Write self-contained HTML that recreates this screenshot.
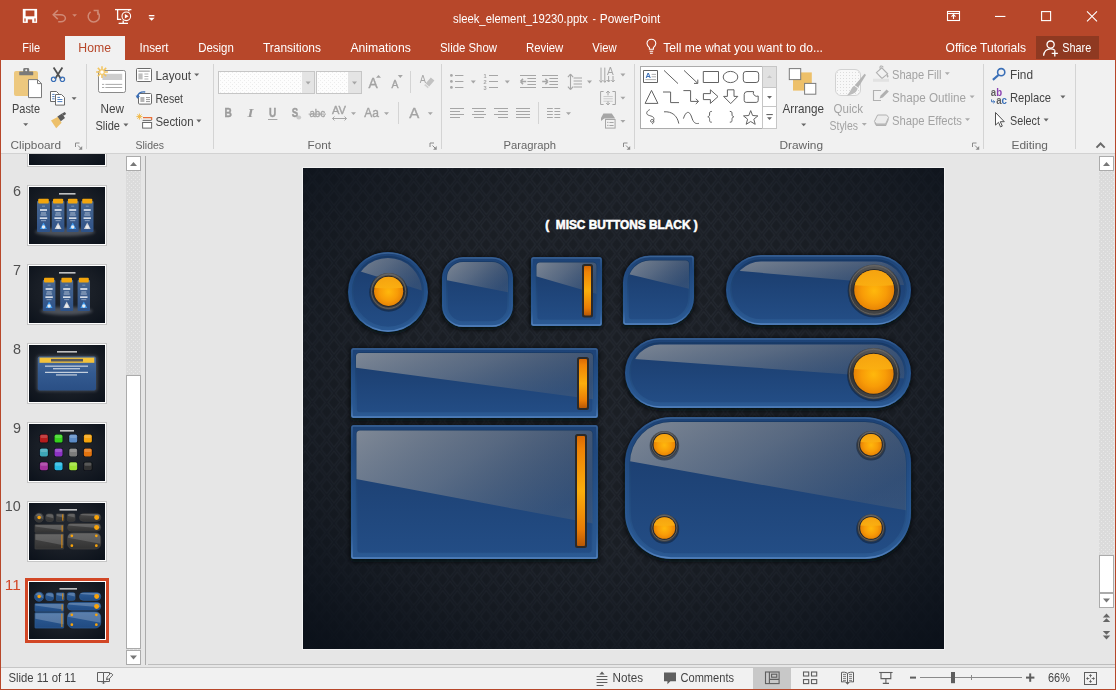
<!DOCTYPE html>
<html lang="en"><head><meta charset="utf-8"><title>sleek_element_19230.pptx - PowerPoint</title>
<style>
html,body{margin:0;padding:0;}
body{width:1116px;height:690px;position:relative;overflow:hidden;background:#E6E6E6;font-family:"Liberation Sans", sans-serif;}
.abs{position:absolute;}
#titlebar{left:0;top:0;width:1116px;height:60px;background:#B7472A;}
#hometab{left:65px;top:36px;width:60px;height:24px;background:#F1F1F1;}
#sharebtn{left:1036px;top:36px;width:63px;height:23px;background:#8F3921;}
#ribbon{left:1px;top:60px;width:1114px;height:93px;background:#F1F1F1;border-bottom:1px solid #D2D2D2;}
.sep{position:absolute;top:64px;width:1px;height:85px;background:#D4D4D4;}
#work{left:1px;top:154px;width:1114px;height:510px;background:#E6E6E6;}
#status{left:1px;top:668px;width:1114px;height:21px;background:#F1F1F1;}
.bl{left:0;top:0;width:1px;height:690px;background:#B7472A;}
.br{left:1115px;top:0;width:1px;height:690px;background:#B7472A;}
.bb{left:0;top:689px;width:1116px;height:1px;background:#B7472A;}
#overlay{left:0;top:0;width:1116px;height:690px;pointer-events:none;will-change:transform;}
#overlay text{font-family:"Liberation Sans", sans-serif;}
#slide{left:303px;top:168px;width:641px;height:481px;box-shadow:0 0 0 1px #F2F2F2;}
</style></head><body>
<div id="titlebar" class="abs"></div>
<div id="hometab" class="abs"></div>
<div id="sharebtn" class="abs"></div>
<div id="ribbon" class="abs"></div>
<div class="sep" style="left:86px"></div><div class="sep" style="left:213px"></div><div class="sep" style="left:441px"></div><div class="sep" style="left:634px"></div><div class="sep" style="left:983px"></div><div class="sep" style="left:1075px"></div>
<div id="work" class="abs"></div>
<svg class="abs" id="thumbs" style="left:1px;top:154px" width="146" height="511" viewBox="1 154 146 511">
<defs>
<radialGradient id="tbg" cx="0.5" cy="0.45" r="0.7"><stop offset="0" stop-color="#232830"/><stop offset="0.6" stop-color="#181D25"/><stop offset="1" stop-color="#0D131C"/></radialGradient>
<linearGradient id="tcard" x1="0" y1="0" x2="0" y2="1"><stop offset="0" stop-color="#4A6890"/><stop offset="1" stop-color="#2E5288"/></linearGradient>
<linearGradient id="tpanel" x1="0" y1="0" x2="0" y2="1"><stop offset="0" stop-color="#4A6C9C"/><stop offset="0.5" stop-color="#335A90"/><stop offset="1" stop-color="#2A4F85"/></linearGradient>
<linearGradient id="tgb" x1="0" y1="0" x2="0" y2="1"><stop offset="0" stop-color="#2D5C96"/><stop offset="1" stop-color="#214B82"/></linearGradient>
<linearGradient id="tgg" x1="0" y1="0" x2="0" y2="1"><stop offset="0" stop-color="#4A4A4A"/><stop offset="1" stop-color="#333333"/></linearGradient>
<pattern id="dots" width="4" height="4" patternUnits="userSpaceOnUse"><rect width="4" height="4" fill="#DBDBDB"/><rect x="1" y="1" width="1" height="1" fill="#E9E9E9"/><rect x="3" y="3" width="1" height="1" fill="#E9E9E9"/></pattern>
<filter id="tb" x="-20%" y="-20%" width="140%" height="140%"><feGaussianBlur stdDeviation="0.35"/></filter>
<filter id="tglow" x="-30%" y="-30%" width="160%" height="160%"><feGaussianBlur stdDeviation="1.6"/></filter>
</defs>
<rect x="27.5" y="106.5" width="79" height="60" fill="#FFFFFF" stroke="#C6C6C6" stroke-width="1"/>
<rect x="29" y="108" width="76" height="57" fill="url(#tbg)"/>
<rect x="27.5" y="185.5" width="79" height="60" fill="#FFFFFF" stroke="#C6C6C6" stroke-width="1"/>
<rect x="29" y="187" width="76" height="57" fill="url(#tbg)"/>
<rect x="59" y="193.2" width="16.5" height="1.3" fill="#E8E8E8" filter="url(#tb)"/>
<ellipse cx="65" cy="232" rx="30" ry="4" fill="#8A8F98" opacity="0.45" filter="url(#tglow)"/>
<g filter="url(#tb)"><rect x="37" y="201" width="13" height="31" rx="1" fill="url(#tcard)"/>
<rect x="38.2" y="198.8" width="10.6" height="4.6" rx="1" fill="#F2A50C"/>
<rect x="42.0" y="205.8" width="3" height="0.6" fill="#9FB4D0"/>
<rect x="40.0" y="209.2" width="7" height="1.6" fill="#E8ECF2"/>
<rect x="41.0" y="212.6" width="5" height="0.8" fill="#C8D4E4"/>
<rect x="40.5" y="214.6" width="6" height="0.8" fill="#C8D4E4"/>
<rect x="39.8" y="217.4" width="7.4" height="1.5" fill="#E8ECF2"/>
<rect x="41.0" y="220.4" width="5" height="0.7" fill="#B0C0D8"/>
</g>
<g filter="url(#tb)"><rect x="51.8" y="201" width="12.600000000000009" height="31" rx="1" fill="url(#tcard)"/>
<rect x="53.0" y="198.8" width="10.200000000000008" height="4.6" rx="1" fill="#F2A50C"/>
<rect x="56.6" y="205.8" width="3" height="0.6" fill="#9FB4D0"/>
<rect x="54.6" y="209.2" width="7" height="1.6" fill="#E8ECF2"/>
<rect x="55.6" y="212.6" width="5" height="0.8" fill="#C8D4E4"/>
<rect x="55.1" y="214.6" width="6" height="0.8" fill="#C8D4E4"/>
<rect x="54.4" y="217.4" width="7.4" height="1.5" fill="#E8ECF2"/>
<rect x="55.6" y="220.4" width="5" height="0.7" fill="#B0C0D8"/>
</g>
<g filter="url(#tb)"><rect x="66.7" y="201" width="12.0" height="31" rx="1" fill="url(#tcard)"/>
<rect x="67.9" y="198.8" width="9.6" height="4.6" rx="1" fill="#F2A50C"/>
<rect x="71.2" y="205.8" width="3" height="0.6" fill="#9FB4D0"/>
<rect x="69.2" y="209.2" width="7" height="1.6" fill="#E8ECF2"/>
<rect x="70.2" y="212.6" width="5" height="0.8" fill="#C8D4E4"/>
<rect x="69.7" y="214.6" width="6" height="0.8" fill="#C8D4E4"/>
<rect x="69.0" y="217.4" width="7.4" height="1.5" fill="#E8ECF2"/>
<rect x="70.2" y="220.4" width="5" height="0.7" fill="#B0C0D8"/>
</g>
<g filter="url(#tb)"><rect x="81" y="201" width="12.5" height="31" rx="1" fill="url(#tcard)"/>
<rect x="82.2" y="198.8" width="10.1" height="4.6" rx="1" fill="#F2A50C"/>
<rect x="85.75" y="205.8" width="3" height="0.6" fill="#9FB4D0"/>
<rect x="83.75" y="209.2" width="7" height="1.6" fill="#E8ECF2"/>
<rect x="84.75" y="212.6" width="5" height="0.8" fill="#C8D4E4"/>
<rect x="84.25" y="214.6" width="6" height="0.8" fill="#C8D4E4"/>
<rect x="83.55" y="217.4" width="7.4" height="1.5" fill="#E8ECF2"/>
<rect x="84.75" y="220.4" width="5" height="0.7" fill="#B0C0D8"/>
</g>
<path d="M43.5 222.5 l3.4 6.6 h-6.8z" fill="#3E9BF0" filter="url(#tb)"/><circle cx="43.5" cy="227" r="1.7" fill="#E8EAEE" filter="url(#tb)"/>
<path d="M58.1 222.5 l3.4 6.6 h-6.8z" fill="#C8CCD2" filter="url(#tb)"/><circle cx="58.1" cy="227" r="1.7" fill="#E8EAEE" filter="url(#tb)"/>
<path d="M72.7 222.5 l3.4 6.6 h-6.8z" fill="#3E9BF0" filter="url(#tb)"/><circle cx="72.7" cy="227" r="1.7" fill="#E8EAEE" filter="url(#tb)"/>
<path d="M87.25 222.5 l3.4 6.6 h-6.8z" fill="#C8CCD2" filter="url(#tb)"/><circle cx="87.25" cy="227" r="1.7" fill="#E8EAEE" filter="url(#tb)"/>
<rect x="27.5" y="264.5" width="79" height="60" fill="#FFFFFF" stroke="#C6C6C6" stroke-width="1"/>
<rect x="29" y="266" width="76" height="57" fill="url(#tbg)"/>
<rect x="59" y="272.2" width="16.5" height="1.3" fill="#E8E8E8" filter="url(#tb)"/>
<ellipse cx="66.5" cy="311" rx="26" ry="4" fill="#8A8F98" opacity="0.45" filter="url(#tglow)"/>
<g filter="url(#tb)"><rect x="42.8" y="280" width="12.600000000000001" height="31" rx="1" fill="url(#tcard)"/>
<rect x="44.0" y="277.8" width="10.200000000000001" height="4.6" rx="1" fill="#F2A50C"/>
<rect x="47.599999999999994" y="284.8" width="3" height="0.6" fill="#9FB4D0"/>
<rect x="45.599999999999994" y="288.2" width="7" height="1.6" fill="#E8ECF2"/>
<rect x="46.599999999999994" y="291.6" width="5" height="0.8" fill="#C8D4E4"/>
<rect x="46.099999999999994" y="293.6" width="6" height="0.8" fill="#C8D4E4"/>
<rect x="45.39999999999999" y="296.4" width="7.4" height="1.5" fill="#E8ECF2"/>
<rect x="46.599999999999994" y="299.4" width="5" height="0.7" fill="#B0C0D8"/>
</g>
<path d="M49.099999999999994 301.5 l3.4 6.6 h-6.8z" fill="#3E9BF0" filter="url(#tb)"/><circle cx="49.099999999999994" cy="306" r="1.7" fill="#E8EAEE" filter="url(#tb)"/>
<g filter="url(#tb)"><rect x="60.2" y="280" width="13.0" height="31" rx="1" fill="url(#tcard)"/>
<rect x="61.400000000000006" y="277.8" width="10.6" height="4.6" rx="1" fill="#F2A50C"/>
<rect x="65.2" y="284.8" width="3" height="0.6" fill="#9FB4D0"/>
<rect x="63.2" y="288.2" width="7" height="1.6" fill="#E8ECF2"/>
<rect x="64.2" y="291.6" width="5" height="0.8" fill="#C8D4E4"/>
<rect x="63.7" y="293.6" width="6" height="0.8" fill="#C8D4E4"/>
<rect x="63.0" y="296.4" width="7.4" height="1.5" fill="#E8ECF2"/>
<rect x="64.2" y="299.4" width="5" height="0.7" fill="#B0C0D8"/>
</g>
<path d="M66.7 301.5 l3.4 6.6 h-6.8z" fill="#C8CCD2" filter="url(#tb)"/><circle cx="66.7" cy="306" r="1.7" fill="#E8EAEE" filter="url(#tb)"/>
<g filter="url(#tb)"><rect x="77.6" y="280" width="12.400000000000006" height="31" rx="1" fill="url(#tcard)"/>
<rect x="78.8" y="277.8" width="10.000000000000005" height="4.6" rx="1" fill="#F2A50C"/>
<rect x="82.3" y="284.8" width="3" height="0.6" fill="#9FB4D0"/>
<rect x="80.3" y="288.2" width="7" height="1.6" fill="#E8ECF2"/>
<rect x="81.3" y="291.6" width="5" height="0.8" fill="#C8D4E4"/>
<rect x="80.8" y="293.6" width="6" height="0.8" fill="#C8D4E4"/>
<rect x="80.1" y="296.4" width="7.4" height="1.5" fill="#E8ECF2"/>
<rect x="81.3" y="299.4" width="5" height="0.7" fill="#B0C0D8"/>
</g>
<path d="M83.8 301.5 l3.4 6.6 h-6.8z" fill="#3E9BF0" filter="url(#tb)"/><circle cx="83.8" cy="306" r="1.7" fill="#E8EAEE" filter="url(#tb)"/>
<rect x="27.5" y="343.5" width="79" height="60" fill="#FFFFFF" stroke="#C6C6C6" stroke-width="1"/>
<rect x="29" y="345" width="76" height="57" fill="url(#tbg)"/>
<rect x="57" y="351.2" width="20" height="1.3" fill="#E8E8E8" filter="url(#tb)"/>
<rect x="36.500" y="355.5" width="61" height="36" rx="3" fill="#9098A4" opacity="0.32" filter="url(#tglow)"/>
<rect x="37.8" y="356.5" width="58.2" height="34" rx="2" fill="url(#tpanel)"/>
<rect x="39.5" y="357.6" width="54.8" height="5.2" fill="#F4C23A"/>
<rect x="51" y="358.9" width="32" height="2.6" fill="#3B4560" opacity="0.85" filter="url(#tb)"/>
<rect x="45" y="365.6" width="43" height="1.1" fill="#E6EAF0" opacity="0.9"/>
<rect x="53" y="368.2" width="27" height="1.1" fill="#E6EAF0" opacity="0.9"/>
<rect x="45" y="371.8" width="43" height="1.1" fill="#E6EAF0" opacity="0.9"/>
<rect x="56" y="374.4" width="21" height="1.1" fill="#E6EAF0" opacity="0.9"/>
<rect x="27.5" y="422.5" width="79" height="60" fill="#FFFFFF" stroke="#C6C6C6" stroke-width="1"/>
<rect x="29" y="424" width="76" height="57" fill="url(#tbg)"/>
<rect x="60" y="430.2" width="14" height="1.3" fill="#E8E8E8" filter="url(#tb)"/>
<rect x="39.3" y="434.20000000000005" width="9.2" height="9" rx="1.8" fill="#05080C" opacity="0.6" filter="url(#tb)"/>
<rect x="39.9" y="434.6" width="8" height="8" rx="1.6" fill="#B51C1E" filter="url(#tb)"/>
<rect x="40.5" y="435.1" width="6.8" height="3" rx="1" fill="#FFFFFF" opacity="0.18"/>
<rect x="53.949999999999996" y="434.20000000000005" width="9.2" height="9" rx="1.8" fill="#05080C" opacity="0.6" filter="url(#tb)"/>
<rect x="54.55" y="434.6" width="8" height="8" rx="1.6" fill="#35D21E" filter="url(#tb)"/>
<rect x="55.15" y="435.1" width="6.8" height="3" rx="1" fill="#FFFFFF" opacity="0.18"/>
<rect x="68.60000000000001" y="434.20000000000005" width="9.2" height="9" rx="1.8" fill="#05080C" opacity="0.6" filter="url(#tb)"/>
<rect x="69.2" y="434.6" width="8" height="8" rx="1.6" fill="#5C8BC6" filter="url(#tb)"/>
<rect x="69.8" y="435.1" width="6.8" height="3" rx="1" fill="#FFFFFF" opacity="0.18"/>
<rect x="83.25" y="434.20000000000005" width="9.2" height="9" rx="1.8" fill="#05080C" opacity="0.6" filter="url(#tb)"/>
<rect x="83.85" y="434.6" width="8" height="8" rx="1.6" fill="#F5A20A" filter="url(#tb)"/>
<rect x="84.44999999999999" y="435.1" width="6.8" height="3" rx="1" fill="#FFFFFF" opacity="0.18"/>
<rect x="39.3" y="448.00000000000006" width="9.2" height="9" rx="1.8" fill="#05080C" opacity="0.6" filter="url(#tb)"/>
<rect x="39.9" y="448.40000000000003" width="8" height="8" rx="1.6" fill="#3CA7B7" filter="url(#tb)"/>
<rect x="40.5" y="448.90000000000003" width="6.8" height="3" rx="1" fill="#FFFFFF" opacity="0.18"/>
<rect x="53.949999999999996" y="448.00000000000006" width="9.2" height="9" rx="1.8" fill="#05080C" opacity="0.6" filter="url(#tb)"/>
<rect x="54.55" y="448.40000000000003" width="8" height="8" rx="1.6" fill="#8B30C2" filter="url(#tb)"/>
<rect x="55.15" y="448.90000000000003" width="6.8" height="3" rx="1" fill="#FFFFFF" opacity="0.18"/>
<rect x="68.60000000000001" y="448.00000000000006" width="9.2" height="9" rx="1.8" fill="#05080C" opacity="0.6" filter="url(#tb)"/>
<rect x="69.2" y="448.40000000000003" width="8" height="8" rx="1.6" fill="#7C7C7C" filter="url(#tb)"/>
<rect x="69.8" y="448.90000000000003" width="6.8" height="3" rx="1" fill="#FFFFFF" opacity="0.18"/>
<rect x="83.25" y="448.00000000000006" width="9.2" height="9" rx="1.8" fill="#05080C" opacity="0.6" filter="url(#tb)"/>
<rect x="83.85" y="448.40000000000003" width="8" height="8" rx="1.6" fill="#E2720F" filter="url(#tb)"/>
<rect x="84.44999999999999" y="448.90000000000003" width="6.8" height="3" rx="1" fill="#FFFFFF" opacity="0.18"/>
<rect x="39.3" y="461.80000000000007" width="9.2" height="9" rx="1.8" fill="#05080C" opacity="0.6" filter="url(#tb)"/>
<rect x="39.9" y="462.20000000000005" width="8" height="8" rx="1.6" fill="#A2309C" filter="url(#tb)"/>
<rect x="40.5" y="462.70000000000005" width="6.8" height="3" rx="1" fill="#FFFFFF" opacity="0.18"/>
<rect x="53.949999999999996" y="461.80000000000007" width="9.2" height="9" rx="1.8" fill="#05080C" opacity="0.6" filter="url(#tb)"/>
<rect x="54.55" y="462.20000000000005" width="8" height="8" rx="1.6" fill="#27B9E2" filter="url(#tb)"/>
<rect x="55.15" y="462.70000000000005" width="6.8" height="3" rx="1" fill="#FFFFFF" opacity="0.18"/>
<rect x="68.60000000000001" y="461.80000000000007" width="9.2" height="9" rx="1.8" fill="#05080C" opacity="0.6" filter="url(#tb)"/>
<rect x="69.2" y="462.20000000000005" width="8" height="8" rx="1.6" fill="#9CE232" filter="url(#tb)"/>
<rect x="69.8" y="462.70000000000005" width="6.8" height="3" rx="1" fill="#FFFFFF" opacity="0.18"/>
<rect x="83.25" y="461.80000000000007" width="9.2" height="9" rx="1.8" fill="#05080C" opacity="0.6" filter="url(#tb)"/>
<rect x="83.85" y="462.20000000000005" width="8" height="8" rx="1.6" fill="#303030" filter="url(#tb)"/>
<rect x="84.44999999999999" y="462.70000000000005" width="6.8" height="3" rx="1" fill="#FFFFFF" opacity="0.18"/>
<rect x="27.5" y="501.5" width="79" height="60" fill="#FFFFFF" stroke="#C6C6C6" stroke-width="1"/>
<rect x="29" y="503" width="76" height="57" fill="url(#tbg)"/>
<rect x="59.5" y="509.2" width="17.5" height="1.3" fill="#E8E8E8" filter="url(#tb)"/>
<g transform="translate(29,503) scale(0.11856474258970359) translate(-303,-168)">
<circle cx="388" cy="292" r="38" fill="url(#tgg)" stroke="#3C3C3C" stroke-width="7"/>
<rect x="445" y="260" width="65" height="64" rx="20" fill="url(#tgg)" stroke="#3C3C3C" stroke-width="7"/>
<rect x="534" y="260" width="65" height="63" rx="3" fill="url(#tgg)" stroke="#3C3C3C" stroke-width="7"/>
<rect x="626" y="259" width="65" height="63" rx="14" fill="url(#tgg)" stroke="#3C3C3C" stroke-width="7"/>
<rect x="729" y="258" width="179" height="64" rx="32" fill="url(#tgg)" stroke="#3C3C3C" stroke-width="7"/>
<rect x="354" y="351" width="241" height="64" rx="3" fill="url(#tgg)" stroke="#3C3C3C" stroke-width="7"/>
<rect x="628" y="341" width="280" height="64" rx="32" fill="url(#tgg)" stroke="#3C3C3C" stroke-width="7"/>
<rect x="354" y="428" width="241" height="128" rx="3" fill="url(#tgg)" stroke="#3C3C3C" stroke-width="7"/>
<rect x="628" y="420" width="280" height="136" rx="44" fill="url(#tgg)" stroke="#3C3C3C" stroke-width="7"/>
<path d="M356 353 H593 V399 L356 367Z" fill="#FFFFFF" opacity="0.16"/>
<path d="M356 431 H593 V525 L356 479Z" fill="#FFFFFF" opacity="0.16"/>
<path d="M640 345 H890 Q905 350 905 380 L632 357 Q634 348 640 345Z" fill="#FFFFFF" opacity="0.16"/>
<path d="M660 423 H870 Q905 425 905 460 V512 L631 461 Q631 425 660 423Z" fill="#FFFFFF" opacity="0.16"/>
<path d="M745 260 H885 Q900 263 905 282 L735 270 Q738 262 745 260Z" fill="#FFFFFF" opacity="0.16"/>
<path d="M447 280 Q447 262 465 262 H490 Q508 262 508 280 V296Z" fill="#FFFFFF" opacity="0.16"/>
<path d="M536 262 H597 V293 L536 278Z" fill="#FFFFFF" opacity="0.16"/>
<path d="M650 261 H689 V290 L628 276 Q632 262 650 261Z" fill="#FFFFFF" opacity="0.16"/>
<path d="M356 275 Q370 258 388 257 Q415 258 422 303Z" fill="#FFFFFF" opacity="0.16"/>
<circle cx="388.6" cy="291" r="15" fill="#F7A30B"/><circle cx="874" cy="290" r="21" fill="#F7A30B"/><circle cx="873.6" cy="373.7" r="21" fill="#F7A30B"/>
<circle cx="664.4" cy="444.7" r="11.5" fill="#F7A30B"/>
<circle cx="664.4" cy="528" r="11.5" fill="#F7A30B"/>
<circle cx="871" cy="444.7" r="11.5" fill="#F7A30B"/>
<circle cx="871" cy="528" r="11.5" fill="#F7A30B"/>
<rect x="583" y="264" width="9" height="53" fill="#D98A10"/><rect x="578" y="357" width="9" height="53" fill="#D98A10"/><rect x="576" y="434" width="9" height="114" fill="#D98A10"/>
</g>
<rect x="25" y="578" width="84" height="65" fill="#D24726"/>
<rect x="28" y="581" width="78" height="59" fill="#FFFFFF"/>
<rect x="29" y="582" width="76" height="57" fill="url(#tbg)"/>
<rect x="59.5" y="588.2" width="17.5" height="1.3" fill="#E8E8E8" filter="url(#tb)"/>
<g transform="translate(29,582) scale(0.11856474258970359) translate(-303,-168)">
<circle cx="388" cy="292" r="38" fill="url(#tgb)" stroke="#2A5890" stroke-width="7"/>
<rect x="445" y="260" width="65" height="64" rx="20" fill="url(#tgb)" stroke="#2A5890" stroke-width="7"/>
<rect x="534" y="260" width="65" height="63" rx="3" fill="url(#tgb)" stroke="#2A5890" stroke-width="7"/>
<rect x="626" y="259" width="65" height="63" rx="14" fill="url(#tgb)" stroke="#2A5890" stroke-width="7"/>
<rect x="729" y="258" width="179" height="64" rx="32" fill="url(#tgb)" stroke="#2A5890" stroke-width="7"/>
<rect x="354" y="351" width="241" height="64" rx="3" fill="url(#tgb)" stroke="#2A5890" stroke-width="7"/>
<rect x="628" y="341" width="280" height="64" rx="32" fill="url(#tgb)" stroke="#2A5890" stroke-width="7"/>
<rect x="354" y="428" width="241" height="128" rx="3" fill="url(#tgb)" stroke="#2A5890" stroke-width="7"/>
<rect x="628" y="420" width="280" height="136" rx="44" fill="url(#tgb)" stroke="#2A5890" stroke-width="7"/>
<path d="M356 353 H593 V399 L356 367Z" fill="#FFFFFF" opacity="0.22"/>
<path d="M356 431 H593 V525 L356 479Z" fill="#FFFFFF" opacity="0.22"/>
<path d="M640 345 H890 Q905 350 905 380 L632 357 Q634 348 640 345Z" fill="#FFFFFF" opacity="0.22"/>
<path d="M660 423 H870 Q905 425 905 460 V512 L631 461 Q631 425 660 423Z" fill="#FFFFFF" opacity="0.22"/>
<path d="M745 260 H885 Q900 263 905 282 L735 270 Q738 262 745 260Z" fill="#FFFFFF" opacity="0.22"/>
<path d="M447 280 Q447 262 465 262 H490 Q508 262 508 280 V296Z" fill="#FFFFFF" opacity="0.22"/>
<path d="M536 262 H597 V293 L536 278Z" fill="#FFFFFF" opacity="0.22"/>
<path d="M650 261 H689 V290 L628 276 Q632 262 650 261Z" fill="#FFFFFF" opacity="0.22"/>
<path d="M356 275 Q370 258 388 257 Q415 258 422 303Z" fill="#FFFFFF" opacity="0.22"/>
<circle cx="388.6" cy="291" r="15" fill="#F7A30B"/><circle cx="874" cy="290" r="21" fill="#F7A30B"/><circle cx="873.6" cy="373.7" r="21" fill="#F7A30B"/>
<circle cx="664.4" cy="444.7" r="11.5" fill="#F7A30B"/>
<circle cx="664.4" cy="528" r="11.5" fill="#F7A30B"/>
<circle cx="871" cy="444.7" r="11.5" fill="#F7A30B"/>
<circle cx="871" cy="528" r="11.5" fill="#F7A30B"/>
<rect x="583" y="264" width="9" height="53" fill="#D98A10"/><rect x="578" y="357" width="9" height="53" fill="#D98A10"/><rect x="576" y="434" width="9" height="114" fill="#D98A10"/>
</g>
<rect x="126" y="156" width="15" height="509" fill="url(#dots)"/>
<rect x="126.5" y="156.5" width="14" height="14" fill="#FFFFFF" stroke="#ABABAB"/><path d="M130 166 h7 l-3.5 -4z" fill="#777"/>
<rect x="126.5" y="375.5" width="14" height="273" fill="#FFFFFF" stroke="#ABABAB"/>
<rect x="126.5" y="650.5" width="14" height="14" fill="#FFFFFF" stroke="#ABABAB"/><path d="M130 655.5 h7 l-3.5 4z" fill="#777"/>
<rect x="145" y="156" width="1" height="509" fill="#ABABAB"/>
</svg>
<div id="slide" class="abs"><svg width="641" height="481" viewBox="303 168 641 481" style="display:block">
<defs>
<pattern id="lat" width="14.5" height="18.6" patternUnits="userSpaceOnUse" x="305" y="170">
<path d="M0 0 L14.5 18.6 M14.5 0 L0 18.6 M-7.25 9.3 L7.25 27.9 M7.25 -9.3 L21.75 9.3 M21.75 9.3 L7.25 27.9 M7.25 -9.3 L-7.25 9.3" stroke="#C8D6FF" stroke-opacity="0.05" stroke-width="3.6" fill="none"/>
<path d="M0 0 L14.5 18.6 M14.5 0 L0 18.6 M-7.25 9.3 L7.25 27.9 M7.25 -9.3 L21.75 9.3 M21.75 9.3 L7.25 27.9 M7.25 -9.3 L-7.25 9.3" stroke="#0A0E14" stroke-opacity="0.35" stroke-width="1.1" fill="none"/>
</pattern>
<radialGradient id="bg" cx="0.5" cy="0.42" r="0.75" gradientTransform="translate(0 0)">
<stop offset="0" stop-color="#1D2127"/><stop offset="0.45" stop-color="#191E25"/><stop offset="0.8" stop-color="#121922"/><stop offset="1" stop-color="#0B111A"/>
</radialGradient>
<radialGradient id="vig" cx="0.5" cy="0.42" r="0.74"><stop offset="0" stop-color="#0A1019" stop-opacity="0"/><stop offset="0.5" stop-color="#0A1019" stop-opacity="0.06"/><stop offset="0.75" stop-color="#0A1019" stop-opacity="0.4"/><stop offset="1" stop-color="#0A1019" stop-opacity="0.92"/></radialGradient>
<linearGradient id="rim" x1="0" y1="0" x2="0" y2="1"><stop offset="0" stop-color="#1D4275"/><stop offset="0.5" stop-color="#245088"/><stop offset="1" stop-color="#2B5A94"/></linearGradient>
<linearGradient id="rimhl" x1="0" y1="0" x2="0" y2="1"><stop offset="0" stop-color="#3A6396" stop-opacity="0.95"/><stop offset="0.2" stop-color="#2B5A93" stop-opacity="0.12"/><stop offset="0.8" stop-color="#3767A2" stop-opacity="0.3"/><stop offset="1" stop-color="#5584BF"/></linearGradient>
<linearGradient id="face" x1="0" y1="0" x2="0" y2="1"><stop offset="0" stop-color="#1A3B6B"/><stop offset="1" stop-color="#234D85"/></linearGradient>
<linearGradient id="facest" x1="0" y1="0" x2="0" y2="1"><stop offset="0" stop-color="#173965"/><stop offset="1" stop-color="#2A5890"/></linearGradient>
<linearGradient id="gloss" x1="0" y1="0" x2="1" y2="0.6"><stop offset="0" stop-color="#A8A8A8" stop-opacity="0.72"/><stop offset="0.5" stop-color="#949494" stop-opacity="0.5"/><stop offset="1" stop-color="#747474" stop-opacity="0.24"/></linearGradient>
<radialGradient id="org" cx="0.5" cy="0.52" r="0.55"><stop offset="0" stop-color="#FFB80C"/><stop offset="0.55" stop-color="#F89C07"/><stop offset="1" stop-color="#E27C05"/></radialGradient>
<linearGradient id="orgtop" x1="0" y1="0" x2="0" y2="1"><stop offset="0" stop-color="#F7A711" stop-opacity="0.9"/><stop offset="1" stop-color="#FAB012" stop-opacity="0.85"/></linearGradient>
<linearGradient id="ring" x1="0" y1="0" x2="0" y2="1"><stop offset="0" stop-color="#5A5A5A"/><stop offset="0.5" stop-color="#333333"/><stop offset="1" stop-color="#444444"/></linearGradient>
<linearGradient id="bar" x1="0" y1="0" x2="0" y2="1"><stop offset="0" stop-color="#D96A05"/><stop offset="0.12" stop-color="#EE8306"/><stop offset="0.5" stop-color="#FBAE0C"/><stop offset="0.85" stop-color="#E87C06"/><stop offset="1" stop-color="#B85805"/></linearGradient>
<filter id="sh" x="-20%" y="-20%" width="140%" height="150%"><feGaussianBlur stdDeviation="2.2"/></filter>
</defs>
<rect x="303" y="168" width="641" height="481" fill="#1B1F25"/>
<rect x="303" y="168" width="641" height="481" fill="url(#lat)"/>
<rect x="303" y="168" width="641" height="481" fill="url(#vig)"/>
<path d="M388 252 H388 A41 41 0 0 1 429 293 V294 A41 41 0 0 1 388 335 H388 A41 41 0 0 1 347 294 V293 A41 41 0 0 1 388 252 Z" fill="#05080D" opacity="0.75" filter="url(#sh)"/>
<path d="M388 252 H388 A40 40 0 0 1 428 292 V292 A40 40 0 0 1 388 332 H388 A40 40 0 0 1 348 292 V292 A40 40 0 0 1 388 252 Z" fill="url(#rim)"/>
<path d="M388 253 H388 A39 39 0 0 1 427 292 V292 A39 39 0 0 1 388 331 H388 A39 39 0 0 1 349 292 V292 A39 39 0 0 1 388 253 Z" fill="none" stroke="url(#rimhl)" stroke-width="1.4"/>
<path d="M388.0 256.5 H388.0 A35.5 35.5 0 0 1 423.5 292.0 V292.0 A35.5 35.5 0 0 1 388.0 327.5 H388.0 A35.5 35.5 0 0 1 352.5 292.0 V292.0 A35.5 35.5 0 0 1 388.0 256.5 Z" fill="url(#face)" stroke="url(#facest)" stroke-width="1.6"/>
<clipPath id="c1"><path d="M388.0 258.0 H388.0 A34.0 34.0 0 0 1 422.0 292.0 V292.0 A34.0 34.0 0 0 1 388.0 326.0 H388.0 A34.0 34.0 0 0 1 354.0 292.0 V292.0 A34.0 34.0 0 0 1 388.0 258.0 Z"/></clipPath>
<path d="M350.5 254.5 H425.5 V291.5 L350.5 268.3 Z" fill="url(#gloss)" clip-path="url(#c1)"/>
<circle cx="388.6" cy="292.3" r="19.4" fill="#0A1322" opacity="0.45"/>
<circle cx="388.6" cy="291.3" r="18.4" fill="url(#ring)"/>
<circle cx="388.6" cy="291.3" r="17.099999999999998" fill="none" stroke="#6E6E6E" stroke-width="0.9" opacity="0.8"/>
<circle cx="388.6" cy="291.3" r="15.6" fill="#2A2A2A"/>
<circle cx="388.6" cy="291.3" r="14.6" fill="url(#org)"/>
<clipPath id="c2"><circle cx="388.6" cy="291.3" r="14.6"/></clipPath>
<path d="M374.0 276.7 H403.20000000000005 V287.796 Q388.6 288.964 374.0 287.796 Z" fill="url(#orgtop)" clip-path="url(#c2)"/>
<path d="M463 257 H492 A22 22 0 0 1 514 279 V308 A22 22 0 0 1 492 330 H463 A22 22 0 0 1 441 308 V279 A22 22 0 0 1 463 257 Z" fill="#05080D" opacity="0.75" filter="url(#sh)"/>
<path d="M463 257 H492 A21 21 0 0 1 513 278 V306 A21 21 0 0 1 492 327 H463 A21 21 0 0 1 442 306 V278 A21 21 0 0 1 463 257 Z" fill="url(#rim)"/>
<path d="M463 258 H492 A20 20 0 0 1 512 278 V306 A20 20 0 0 1 492 326 H463 A20 20 0 0 1 443 306 V278 A20 20 0 0 1 463 258 Z" fill="none" stroke="url(#rimhl)" stroke-width="1.4"/>
<path d="M463 262 H492 A16 16 0 0 1 508 278 V306 A16 16 0 0 1 492 322 H463 A16 16 0 0 1 447 306 V278 A16 16 0 0 1 463 262 Z" fill="url(#face)" stroke="url(#facest)" stroke-width="1.6"/>
<clipPath id="c3"><path d="M463 262 H492 A16 16 0 0 1 508 278 V306 A16 16 0 0 1 492 322 H463 A16 16 0 0 1 447 306 V278 A16 16 0 0 1 463 262 Z"/></clipPath>
<path d="M445 260 H510 V292.7 L445 279.8 Z" fill="url(#gloss)" clip-path="url(#c3)"/>
<path d="M533.5 257 H599.5 A3.5 3.5 0 0 1 603 260.5 V325.5 A3.5 3.5 0 0 1 599.5 329 H533.5 A3.5 3.5 0 0 1 530 325.5 V260.5 A3.5 3.5 0 0 1 533.5 257 Z" fill="#05080D" opacity="0.75" filter="url(#sh)"/>
<path d="M533.5 257 H599.5 A2.5 2.5 0 0 1 602 259.5 V323.5 A2.5 2.5 0 0 1 599.5 326 H533.5 A2.5 2.5 0 0 1 531 323.5 V259.5 A2.5 2.5 0 0 1 533.5 257 Z" fill="url(#rim)"/>
<path d="M533.5 258 H599.5 A1.5 1.5 0 0 1 601 259.5 V323.5 A1.5 1.5 0 0 1 599.5 325 H533.5 A1.5 1.5 0 0 1 532 323.5 V259.5 A1.5 1.5 0 0 1 533.5 258 Z" fill="none" stroke="url(#rimhl)" stroke-width="1.4"/>
<path d="M540.0 262.5 H593.0 A3.5 3.5 0 0 1 596.5 266.0 V317.0 A3.5 3.5 0 0 1 593.0 320.5 H540.0 A3.5 3.5 0 0 1 536.5 317.0 V266.0 A3.5 3.5 0 0 1 540.0 262.5 Z" fill="url(#face)" stroke="url(#facest)" stroke-width="1.6"/>
<clipPath id="c4"><path d="M540.0 262.5 H593.0 A3.5 3.5 0 0 1 596.5 266.0 V317.0 A3.5 3.5 0 0 1 593.0 320.5 H540.0 A3.5 3.5 0 0 1 536.5 317.0 V266.0 A3.5 3.5 0 0 1 540.0 262.5 Z"/></clipPath>
<path d="M534.5 260.5 H598.5 V294.4 L534.5 275.9 Z" fill="url(#gloss)" clip-path="url(#c4)"/>
<rect x="582" y="264" width="11" height="53.5" rx="2.5" fill="#2C2A28"/>
<rect x="584" y="266" width="7" height="49.5" rx="1" fill="url(#bar)"/>
<path d="M650 255.5 H691 A4 4 0 0 1 695 259.5 V300 A28 28 0 0 1 667 328 H626 A4 4 0 0 1 622 324 V283.5 A28 28 0 0 1 650 255.5 Z" fill="#05080D" opacity="0.75" filter="url(#sh)"/>
<path d="M650 255.5 H691 A3 3 0 0 1 694 258.5 V298 A27 27 0 0 1 667 325 H626 A3 3 0 0 1 623 322 V282.5 A27 27 0 0 1 650 255.5 Z" fill="url(#rim)"/>
<path d="M650 256.5 H691 A2 2 0 0 1 693 258.5 V298 A26 26 0 0 1 667 324 H626 A2 2 0 0 1 624 322 V282.5 A26 26 0 0 1 650 256.5 Z" fill="none" stroke="url(#rimhl)" stroke-width="1.4"/>
<path d="M650 260.5 H685.5 A3.5 3.5 0 0 1 689 264.0 V298 A22 22 0 0 1 667 320 H631.5 A3.5 3.5 0 0 1 628 316.5 V282.5 A22 22 0 0 1 650 260.5 Z" fill="url(#face)" stroke="url(#facest)" stroke-width="1.6"/>
<clipPath id="c5"><path d="M650 260.5 H685.5 A3.5 3.5 0 0 1 689 264.0 V298 A22 22 0 0 1 667 320 H631.5 A3.5 3.5 0 0 1 628 316.5 V282.5 A22 22 0 0 1 650 260.5 Z"/></clipPath>
<path d="M626 258.5 H691 V289.3 L626 273.6 Z" fill="url(#gloss)" clip-path="url(#c5)"/>
<path d="M761 255 H876 A36 36 0 0 1 912 291 V292 A36 36 0 0 1 876 328 H761 A36 36 0 0 1 725 292 V291 A36 36 0 0 1 761 255 Z" fill="#05080D" opacity="0.75" filter="url(#sh)"/>
<path d="M761 255 H876 A35 35 0 0 1 911 290 V290 A35 35 0 0 1 876 325 H761 A35 35 0 0 1 726 290 V290 A35 35 0 0 1 761 255 Z" fill="url(#rim)"/>
<path d="M761 256 H876 A34 34 0 0 1 910 290 V290 A34 34 0 0 1 876 324 H761 A34 34 0 0 1 727 290 V290 A34 34 0 0 1 761 256 Z" fill="none" stroke="url(#rimhl)" stroke-width="1.4"/>
<path d="M761 260 H876 A30 30 0 0 1 906 290 V290 A30 30 0 0 1 876 320 H761 A30 30 0 0 1 731 290 V290 A30 30 0 0 1 761 260 Z" fill="url(#face)" stroke="url(#facest)" stroke-width="1.6"/>
<clipPath id="c6"><path d="M761.0 261.5 H876.0 A28.5 28.5 0 0 1 904.5 290.0 V290.0 A28.5 28.5 0 0 1 876.0 318.5 H761.0 A28.5 28.5 0 0 1 732.5 290.0 V290.0 A28.5 28.5 0 0 1 761.0 261.5 Z"/></clipPath>
<path d="M729 258 H908 V285.6 L729 270 Z" fill="url(#gloss)" clip-path="url(#c6)"/>
<circle cx="874.2" cy="291" r="26.6" fill="#0A1322" opacity="0.45"/>
<circle cx="874.2" cy="290" r="25.6" fill="url(#ring)"/>
<circle cx="874.2" cy="290" r="24.3" fill="none" stroke="#6E6E6E" stroke-width="0.9" opacity="0.8"/>
<circle cx="874.2" cy="290" r="21" fill="#2A2A2A"/>
<circle cx="874.2" cy="290" r="20" fill="url(#org)"/>
<clipPath id="c7"><circle cx="874.2" cy="290" r="20"/></clipPath>
<path d="M854.2 270 H894.2 V285.2 Q874.2 286.8 854.2 285.2 Z" fill="url(#orgtop)" clip-path="url(#c7)"/>
<path d="M353.5 348 H595.5 A3.5 3.5 0 0 1 599 351.5 V417.5 A3.5 3.5 0 0 1 595.5 421 H353.5 A3.5 3.5 0 0 1 350 417.5 V351.5 A3.5 3.5 0 0 1 353.5 348 Z" fill="#05080D" opacity="0.75" filter="url(#sh)"/>
<path d="M353.5 348 H595.5 A2.5 2.5 0 0 1 598 350.5 V415.5 A2.5 2.5 0 0 1 595.5 418 H353.5 A2.5 2.5 0 0 1 351 415.5 V350.5 A2.5 2.5 0 0 1 353.5 348 Z" fill="url(#rim)"/>
<path d="M353.5 349 H595.5 A1.5 1.5 0 0 1 597 350.5 V415.5 A1.5 1.5 0 0 1 595.5 417 H353.5 A1.5 1.5 0 0 1 352 415.5 V350.5 A1.5 1.5 0 0 1 353.5 349 Z" fill="none" stroke="url(#rimhl)" stroke-width="1.4"/>
<path d="M359.5 353 H589.5 A3.5 3.5 0 0 1 593 356.5 V409.5 A3.5 3.5 0 0 1 589.5 413 H359.5 A3.5 3.5 0 0 1 356 409.5 V356.5 A3.5 3.5 0 0 1 359.5 353 Z" fill="url(#face)" stroke="url(#facest)" stroke-width="1.6"/>
<clipPath id="c8"><path d="M359.5 353 H589.5 A3.5 3.5 0 0 1 593 356.5 V409.5 A3.5 3.5 0 0 1 589.5 413 H359.5 A3.5 3.5 0 0 1 356 409.5 V356.5 A3.5 3.5 0 0 1 359.5 353 Z"/></clipPath>
<path d="M354 351 H595 V399.6 L354 367.4 Z" fill="url(#gloss)" clip-path="url(#c8)"/>
<rect x="577" y="357" width="12" height="53" rx="2.5" fill="#2C2A28"/>
<rect x="579" y="359" width="8" height="49" rx="1" fill="url(#bar)"/>
<path d="M660 338 H876 A36 36 0 0 1 912 374 V375 A36 36 0 0 1 876 411 H660 A36 36 0 0 1 624 375 V374 A36 36 0 0 1 660 338 Z" fill="#05080D" opacity="0.75" filter="url(#sh)"/>
<path d="M660 338 H876 A35 35 0 0 1 911 373 V373 A35 35 0 0 1 876 408 H660 A35 35 0 0 1 625 373 V373 A35 35 0 0 1 660 338 Z" fill="url(#rim)"/>
<path d="M660 339 H876 A34 34 0 0 1 910 373 V373 A34 34 0 0 1 876 407 H660 A34 34 0 0 1 626 373 V373 A34 34 0 0 1 660 339 Z" fill="none" stroke="url(#rimhl)" stroke-width="1.4"/>
<path d="M660 343 H876 A30 30 0 0 1 906 373 V373 A30 30 0 0 1 876 403 H660 A30 30 0 0 1 630 373 V373 A30 30 0 0 1 660 343 Z" fill="url(#face)" stroke="url(#facest)" stroke-width="1.6"/>
<clipPath id="c9"><path d="M660.0 344.5 H876.0 A28.5 28.5 0 0 1 904.5 373.0 V373.0 A28.5 28.5 0 0 1 876.0 401.5 H660.0 A28.5 28.5 0 0 1 631.5 373.0 V373.0 A28.5 28.5 0 0 1 660.0 344.5 Z"/></clipPath>
<path d="M628 341 H908 V378.7 L628 358.6 Z" fill="url(#gloss)" clip-path="url(#c9)"/>
<circle cx="873.6" cy="374.7" r="26.6" fill="#0A1322" opacity="0.45"/>
<circle cx="873.6" cy="373.7" r="25.6" fill="url(#ring)"/>
<circle cx="873.6" cy="373.7" r="24.3" fill="none" stroke="#6E6E6E" stroke-width="0.9" opacity="0.8"/>
<circle cx="873.6" cy="373.7" r="21" fill="#2A2A2A"/>
<circle cx="873.6" cy="373.7" r="20" fill="url(#org)"/>
<clipPath id="c10"><circle cx="873.6" cy="373.7" r="20"/></clipPath>
<path d="M853.6 353.7 H893.6 V368.9 Q873.6 370.5 853.6 368.9 Z" fill="url(#orgtop)" clip-path="url(#c10)"/>
<path d="M353.5 425 H595.5 A3.5 3.5 0 0 1 599 428.5 V558.5 A3.5 3.5 0 0 1 595.5 562 H353.5 A3.5 3.5 0 0 1 350 558.5 V428.5 A3.5 3.5 0 0 1 353.5 425 Z" fill="#05080D" opacity="0.75" filter="url(#sh)"/>
<path d="M353.5 425 H595.5 A2.5 2.5 0 0 1 598 427.5 V556.5 A2.5 2.5 0 0 1 595.5 559 H353.5 A2.5 2.5 0 0 1 351 556.5 V427.5 A2.5 2.5 0 0 1 353.5 425 Z" fill="url(#rim)"/>
<path d="M353.5 426 H595.5 A1.5 1.5 0 0 1 597 427.5 V556.5 A1.5 1.5 0 0 1 595.5 558 H353.5 A1.5 1.5 0 0 1 352 556.5 V427.5 A1.5 1.5 0 0 1 353.5 426 Z" fill="none" stroke="url(#rimhl)" stroke-width="1.4"/>
<path d="M360.0 430.5 H589.0 A3.5 3.5 0 0 1 592.5 434.0 V550.0 A3.5 3.5 0 0 1 589.0 553.5 H360.0 A3.5 3.5 0 0 1 356.5 550.0 V434.0 A3.5 3.5 0 0 1 360.0 430.5 Z" fill="url(#face)" stroke="url(#facest)" stroke-width="1.6"/>
<clipPath id="c11"><path d="M360.0 430.5 H589.0 A3.5 3.5 0 0 1 592.5 434.0 V550.0 A3.5 3.5 0 0 1 589.0 553.5 H360.0 A3.5 3.5 0 0 1 356.5 550.0 V434.0 A3.5 3.5 0 0 1 360.0 430.5 Z"/></clipPath>
<path d="M354.5 428.5 H594.5 V523.9 L354.5 478.8 Z" fill="url(#gloss)" clip-path="url(#c11)"/>
<rect x="575" y="434" width="12" height="114" rx="2.5" fill="#2C2A28"/>
<rect x="577" y="436" width="8" height="110" rx="1" fill="url(#bar)"/>
<path d="M671 417 H865 A47 47 0 0 1 912 464 V515 A47 47 0 0 1 865 562 H671 A47 47 0 0 1 624 515 V464 A47 47 0 0 1 671 417 Z" fill="#05080D" opacity="0.75" filter="url(#sh)"/>
<path d="M671 417 H865 A46 46 0 0 1 911 463 V513 A46 46 0 0 1 865 559 H671 A46 46 0 0 1 625 513 V463 A46 46 0 0 1 671 417 Z" fill="url(#rim)"/>
<path d="M671 418 H865 A45 45 0 0 1 910 463 V513 A45 45 0 0 1 865 558 H671 A45 45 0 0 1 626 513 V463 A45 45 0 0 1 671 418 Z" fill="none" stroke="url(#rimhl)" stroke-width="1.4"/>
<path d="M671 422 H865 A41 41 0 0 1 906 463 V513 A41 41 0 0 1 865 554 H671 A41 41 0 0 1 630 513 V463 A41 41 0 0 1 671 422 Z" fill="url(#face)" stroke="url(#facest)" stroke-width="1.6"/>
<clipPath id="c12"><path d="M671 422 H865 A41 41 0 0 1 906 463 V513 A41 41 0 0 1 865 554 H671 A41 41 0 0 1 630 513 V463 A41 41 0 0 1 671 422 Z"/></clipPath>
<path d="M628 420 H908 V510.7 L628 461 Z" fill="url(#gloss)" clip-path="url(#c12)"/>
<circle cx="664.4" cy="445.7" r="14.8" fill="#0A1322" opacity="0.45"/>
<circle cx="664.4" cy="444.7" r="13.8" fill="url(#ring)"/>
<circle cx="664.4" cy="444.7" r="12.5" fill="none" stroke="#6E6E6E" stroke-width="0.9" opacity="0.8"/>
<circle cx="664.4" cy="444.7" r="11.8" fill="#2A2A2A"/>
<circle cx="664.4" cy="444.7" r="10.8" fill="url(#org)"/>
<clipPath id="c13"><circle cx="664.4" cy="444.7" r="10.8"/></clipPath>
<path d="M653.6 433.9 H675.1999999999999 V442.108 Q664.4 442.972 653.6 442.108 Z" fill="url(#orgtop)" clip-path="url(#c13)"/>
<circle cx="664.4" cy="529" r="14.8" fill="#0A1322" opacity="0.45"/>
<circle cx="664.4" cy="528" r="13.8" fill="url(#ring)"/>
<circle cx="664.4" cy="528" r="12.5" fill="none" stroke="#6E6E6E" stroke-width="0.9" opacity="0.8"/>
<circle cx="664.4" cy="528" r="11.8" fill="#2A2A2A"/>
<circle cx="664.4" cy="528" r="10.8" fill="url(#org)"/>
<clipPath id="c14"><circle cx="664.4" cy="528" r="10.8"/></clipPath>
<path d="M653.6 517.2 H675.1999999999999 V525.408 Q664.4 526.272 653.6 525.408 Z" fill="url(#orgtop)" clip-path="url(#c14)"/>
<circle cx="871" cy="445.7" r="14.8" fill="#0A1322" opacity="0.45"/>
<circle cx="871" cy="444.7" r="13.8" fill="url(#ring)"/>
<circle cx="871" cy="444.7" r="12.5" fill="none" stroke="#6E6E6E" stroke-width="0.9" opacity="0.8"/>
<circle cx="871" cy="444.7" r="11.8" fill="#2A2A2A"/>
<circle cx="871" cy="444.7" r="10.8" fill="url(#org)"/>
<clipPath id="c15"><circle cx="871" cy="444.7" r="10.8"/></clipPath>
<path d="M860.2 433.9 H881.8 V442.108 Q871 442.972 860.2 442.108 Z" fill="url(#orgtop)" clip-path="url(#c15)"/>
<circle cx="871" cy="529" r="14.8" fill="#0A1322" opacity="0.45"/>
<circle cx="871" cy="528" r="13.8" fill="url(#ring)"/>
<circle cx="871" cy="528" r="12.5" fill="none" stroke="#6E6E6E" stroke-width="0.9" opacity="0.8"/>
<circle cx="871" cy="528" r="11.8" fill="#2A2A2A"/>
<circle cx="871" cy="528" r="10.8" fill="url(#org)"/>
<clipPath id="c16"><circle cx="871" cy="528" r="10.8"/></clipPath>
<path d="M860.2 517.2 H881.8 V525.408 Q871 526.272 860.2 525.408 Z" fill="url(#orgtop)" clip-path="url(#c16)"/>
<text x="545.3" y="228.7" font-family="&quot;Liberation Sans&quot;, sans-serif" font-weight="bold" font-size="12" fill="#FFFFFF" stroke="#FFFFFF" stroke-width="0.55" textLength="152.4" lengthAdjust="spacingAndGlyphs" xml:space="preserve">(  MISC BUTTONS BLACK )</text>
</svg></div>
<div id="status" class="abs"></div>
<svg id="overlay" class="abs" width="1116" height="690" viewBox="0 0 1116 690">
<rect x="22.8" y="8.9" width="14.3" height="14" fill="#fff"/><rect x="25.6" y="10.5" width="8.8" height="5.8" fill="#B7472A"/><rect x="24.4" y="18.4" width="1.2" height="3.2" fill="#B7472A"/><rect x="34.4" y="18.4" width="1.2" height="3.2" fill="#B7472A"/><rect x="27.8" y="19.4" width="4.4" height="3.6" fill="#B7472A"/>
<g fill="none" stroke="#D08A76" stroke-width="1.5"><path d="M57.8 10.3 l-4.6 4.4 l4.6 4.4"/><path d="M53.6 14.7 h7.2 a4.6 3.5 0 0 1 0 7 h-2.6"/></g>
<path d="M72.2 14.2 h4.8 l-2.4 2.5z" fill="#D08A76"/>
<g fill="none" stroke="#D08A76" stroke-width="1.5"><path d="M90.6 11.8 a5.6 5.6 0 1 0 6.6 0.2"/><path d="M93.6 10.6 h4.4 v4.4"/></g>
<g fill="none" stroke="#fff" stroke-width="1.3"><path d="M115 9.6 h16.4"/><path d="M117.6 10 v9.4 h3.6"/><path d="M128.8 10 v1.2"/><circle cx="126.3" cy="16.3" r="4.3" stroke-width="1.1"/><path d="M123.2 20.6 v2.4 M118.6 23.3 h9.4"/></g><path d="M124.9 14 l3.7 2.3 l-3.7 2.3z" fill="#fff"/>
<rect x="148.8" y="15" width="5.6" height="1.3" fill="#fff"/><path d="M148.6 17.8 h6 l-3 3z" fill="#fff"/>
<g fill="none" stroke="#fff" stroke-width="1.1"><rect x="947.5" y="11.5" width="12" height="9"/><path d="M947.5 13.5 h12" /><path d="M953.5 19 v-4 M951.5 16.6 l2 -2 l2 2"/></g>
<rect x="995" y="15.9" width="10.4" height="1.1" fill="#fff"/>
<rect x="1041.6" y="11.6" width="9" height="9" fill="none" stroke="#fff" stroke-width="1.1"/>
<path d="M1087 11.3 l10 10 M1097 11.3 l-10 10" stroke="#fff" stroke-width="1.1" fill="none"/>
<g fill="none" stroke="#fff" stroke-width="1.1"><path d="M649.4 49.2 v-1.6 c-1.6 -1.4 -2.4 -2.4 -2.4 -4 a4.4 4.4 0 0 1 8.8 0 c0 1.6 -0.8 2.6 -2.4 4 v1.6z"/><path d="M649.6 51.3 h3.6 M650 53.2 h2.8"/></g>
<g fill="none" stroke="#fff" stroke-width="1.3"><circle cx="1050.6" cy="44.6" r="3.6"/><path d="M1043.6 55.8 c0.4 -4.4 3 -7 7 -7 c1.6 0 3 0.4 4 1.2"/><path d="M1054.8 50.2 v6.2 M1051.7 53.3 h6.2"/></g>
<rect x="14" y="71" width="24" height="25" rx="2" fill="#EDC87E"/><rect x="19.2" y="71.4" width="14" height="3.9" rx="0.6" fill="#7A7A7A"/><rect x="23.2" y="68" width="6" height="5" rx="1.4" fill="#7A7A7A"/><circle cx="26.2" cy="70.3" r="1" fill="#F1F1F1"/><path d="M28.5 79.6 h9 l4 4 v14 h-13z" fill="#fff" stroke="#7A7A7A" stroke-width="1"/><path d="M37.5 79.6 v4 h4" fill="none" stroke="#7A7A7A" stroke-width="1"/>
<path d="M23.2 123.2 h5 l-2.5 2.8z" fill="#666"/>
<g fill="none"><path d="M53.6 67.6 l7.4 11.4 M62.4 67.6 l-7.4 11.4" stroke="#505050" stroke-width="1.8"/><circle cx="53.6" cy="79.3" r="2.2" stroke="#3A6FB7" stroke-width="1.2"/><circle cx="62.4" cy="79.3" r="2.2" stroke="#3A6FB7" stroke-width="1.2"/></g>
<g fill="#fff" stroke="#6A6A6A" stroke-width="1"><path d="M50.5 91.5 h6 l2 2 v8 h-8z"/><path d="M55.5 94.5 h6 l3 3 v7.6 h-9z"/></g><path d="M57.4 99.5 h5 M57.4 101.6 h5 M57.4 97.4 h2.6 M52.2 94.4 h2.4 M52.2 96.6 h2.4 M52.2 98.800 h2.400" stroke="#3A6FB7" stroke-width="0.9"/>
<path d="M71.6 97.2 h5 l-2.5 2.8z" fill="#666"/>
<path d="M51 120.4 l7 -3.6 l3.6 6 l-5.4 5.4z" fill="#EDC06A"/><path d="M57.4 116.6 l4.6 -3 l3 4.4 l-4.2 3.2z" fill="#5A5A5A"/><path d="M62 113.6 l2.8 -1.6 l1.4 2 l-2.6 1.8z" fill="#5A5A5A"/>
<g fill="none" stroke="#8A8A8A" stroke-width="1"><path d="M75.5 147.0 V143.0 H79.5"/><path d="M78 145.5 l3.6 3.6"/></g><path d="M82.2 146.1 v3.6 h-3.6z" fill="#8A8A8A"/>
<g fill="none" stroke="#8A8A8A" stroke-width="1"><path d="M430.0 147.0 V143.0 H434.0"/><path d="M432.5 145.5 l3.6 3.6"/></g><path d="M436.7 146.1 v3.6 h-3.6z" fill="#8A8A8A"/>
<g fill="none" stroke="#8A8A8A" stroke-width="1"><path d="M623.5 147.0 V143.0 H627.5"/><path d="M626 145.5 l3.6 3.6"/></g><path d="M630.2 146.1 v3.6 h-3.6z" fill="#8A8A8A"/>
<g fill="none" stroke="#8A8A8A" stroke-width="1"><path d="M972.5 147.0 V143.0 H976.5"/><path d="M975 145.5 l3.6 3.6"/></g><path d="M979.2 146.1 v3.6 h-3.6z" fill="#8A8A8A"/>
<rect x="98.5" y="70.5" width="27" height="22" rx="1.8" fill="#fff" stroke="#8A8A8A"/><rect x="102.4" y="73.8" width="19.8" height="6.2" fill="#CDCDCD"/><path d="M102 84.400 h2.200 M105.400 84.400 h16.800 M102 87.500 h2.200 M105.400 87.500 h16.800" stroke="#A0A0A0" stroke-width="0.9"/>
<g stroke="#F2C45E" stroke-width="1.5"><path d="M102 66.200 v11.800 M96.100 72.100 h11.800 M97.800 67.900 l8.400 8.400 M106.200 67.900 l-8.400 8.400"/></g><circle cx="102" cy="72.100" r="2.200" fill="#fff" stroke="#F2C45E" stroke-width="0.8"/>
<path d="M123.400 123.600 h5 l-2.5 2.800z" fill="#666"/>
<rect x="136.500" y="68.500" width="15" height="13" rx="1" fill="#fff" stroke="#6A6A6A"/><rect x="138.400" y="70.400" width="11.400" height="1.600" fill="#B8B8B8"/><rect x="138.400" y="73.400" width="4.200" height="6" fill="#C0C0C0"/><path d="M144.400 74 h4 M144.400 76.500 h4 M144.400 79 h4" stroke="#A0A0A0" stroke-width="0.800"/>
<path d="M194.200 73.400 h5 l-2.5 2.800z" fill="#666"/>
<rect x="138.5" y="93.5" width="13" height="10.6" rx="1" fill="#fff" stroke="#6A6A6A"/><rect x="140.4" y="97" width="4" height="5" fill="#B5B5B5"/><path d="M146 97.6 h4 M146 99.6 h4 M146 101.6 h4" stroke="#8A8A8A" stroke-width="0.9"/><path d="M137.4 97.6 c0 -4 3 -6.2 7.8 -5.6" fill="none" stroke="#3A6FB7" stroke-width="1.4"/><path d="M135.6 95.4 l1.8 3.4 l2.6 -2.8z" fill="#3A6FB7"/>
<g stroke="#F0B53C" stroke-width="0.9"><path d="M139.4 113.6 v6 M136.4 116.6 h6 M137.3 114.5 l4.2 4.2 M141.5 114.5 l-4.2 4.2"/></g><path d="M143 117.6 h8.6 v2.4" fill="none" stroke="#E8703A" stroke-width="1.3"/><rect x="142.6" y="122.5" width="9" height="5.6" fill="#fff" stroke="#6A6A6A"/><path d="M142.6 120.4 h9" stroke="#6A6A6A" stroke-width="1"/>
<path d="M196.4 119.6 h5 l-2.5 2.8z" fill="#666"/>
<defs><pattern id="fdots" width="4" height="4" patternUnits="userSpaceOnUse"><rect width="4" height="4" fill="#FDFDFD"/><rect x="0" y="0" width="1" height="1" fill="#ECECEC"/><rect x="2" y="2" width="1" height="1" fill="#ECECEC"/></pattern></defs>
<rect x="218.5" y="71.5" width="96" height="22" fill="url(#fdots)" stroke="#C6C6C6"/><rect x="302" y="72" width="12" height="21" fill="#E4E4E4"/>
<rect x="316.5" y="71.5" width="45" height="22" fill="url(#fdots)" stroke="#C6C6C6"/><rect x="348" y="72" width="13" height="21" fill="#E4E4E4"/>
<path d="M305.6 81.6 h5 l-2.5 2.8z" fill="#A6A6A6"/><path d="M352 81.6 h5 l-2.5 2.8z" fill="#A6A6A6"/>
<path d="M376 77.800 h5 l-2.5 -2.8z" fill="#A6A6A6"/><path d="M397.800 75.100 h5 l-2.5 2.8z" fill="#A6A6A6"/>
<rect x="410" y="71" width="1" height="22" fill="#D4D4D4"/>
<text x="419.800" y="82.800" font-size="10.800" fill="#A6A6A6" font-family="&quot;Liberation Sans&quot;, sans-serif" textLength="6.200" lengthAdjust="spacingAndGlyphs">A</text><path d="M425.600 83.600 l5.200 -6.200 l3.600 3 l-5.200 6.200z" fill="#C2C2C2"/><path d="M424.200 85.200 l1 -1.200 l3.600 3 l-1 1.200z" fill="#D0D0D0"/>
<rect x="268" y="119" width="9.4" height="1" fill="#A6A6A6"/>
<rect x="308.6" y="113.6" width="17.4" height="1" fill="#A6A6A6"/>
<path d="M332.5 118.5 h14 M332.5 118.5 l2 -2 M332.5 118.5 l2 2 M346.5 118.5 l-2 -2 M346.5 118.5 l-2 2" stroke="#A6A6A6" stroke-width="1" fill="none"/>
<path d="M351 112.2 h5 l-2.5 2.8z" fill="#A6A6A6"/><path d="M384 112.2 h5 l-2.5 2.8z" fill="#A6A6A6"/><path d="M427.800 112.2 h5 l-2.5 2.8z" fill="#A6A6A6"/>
<rect x="398" y="102" width="1" height="22" fill="#D4D4D4"/>
<ellipse cx="298.800" cy="117.400" rx="2.400" ry="2" fill="#C4C4C4" opacity="0.85"/>
<circle cx="451.4" cy="75.4" r="1.4" fill="#A6A6A6"/><circle cx="451.4" cy="81.4" r="1.4" fill="#A6A6A6"/><circle cx="451.4" cy="87.4" r="1.4" fill="#A6A6A6"/><rect x="455" y="75" width="8.4" height="1" fill="#A6A6A6"/><rect x="455" y="81" width="8.4" height="1" fill="#A6A6A6"/><rect x="455" y="87" width="8.4" height="1" fill="#A6A6A6"/>
<path d="M470.8 80.6 h5 l-2.5 2.8z" fill="#A6A6A6"/>
<text x="483.6" y="77.6" font-size="5.6" font-weight="bold" fill="#A6A6A6" font-family="&quot;Liberation Sans&quot;, sans-serif">1</text><text x="483.6" y="83.6" font-size="5.6" font-weight="bold" fill="#A6A6A6" font-family="&quot;Liberation Sans&quot;, sans-serif">2</text><text x="483.6" y="89.6" font-size="5.6" font-weight="bold" fill="#A6A6A6" font-family="&quot;Liberation Sans&quot;, sans-serif">3</text><rect x="489" y="75" width="9" height="1" fill="#A6A6A6"/><rect x="489" y="81" width="9" height="1" fill="#A6A6A6"/><rect x="489" y="87" width="9" height="1" fill="#A6A6A6"/>
<path d="M504.8 80.6 h5 l-2.5 2.8z" fill="#A6A6A6"/>
<rect x="520" y="75" width="16" height="1" fill="#A6A6A6"/><rect x="527.4" y="78" width="8.6" height="1" fill="#A6A6A6"/><rect x="527.4" y="81" width="8.6" height="1" fill="#A6A6A6"/><rect x="527.4" y="84" width="8.6" height="1" fill="#A6A6A6"/><rect x="520" y="87" width="16" height="1" fill="#A6A6A6"/><path d="M520.6 81.500 h5.6 M520.4 81.500 l2.6 -2.6 M520.4 81.500 l2.6 2.6" stroke="#A6A6A6" fill="none" stroke-width="1.5"/>
<rect x="542" y="75" width="16" height="1" fill="#A6A6A6"/><rect x="549.4" y="78" width="8.6" height="1" fill="#A6A6A6"/><rect x="549.4" y="81" width="8.6" height="1" fill="#A6A6A6"/><rect x="549.4" y="84" width="8.6" height="1" fill="#A6A6A6"/><rect x="542" y="87" width="16" height="1" fill="#A6A6A6"/><path d="M542.2 81.500 h5.6 M548 81.500 l-2.6 -2.6 M548 81.500 l-2.6 2.6" stroke="#A6A6A6" fill="none" stroke-width="1.5"/>
<rect x="573.6" y="77.5" width="8.4" height="1" fill="#A6A6A6"/><rect x="573.6" y="80.5" width="8.4" height="1" fill="#A6A6A6"/><rect x="573.6" y="83.5" width="8.4" height="1" fill="#A6A6A6"/><rect x="573.6" y="86.5" width="8.4" height="1" fill="#A6A6A6"/><path d="M570.5 74.6 v14.6 M570.5 74.2 l-2.6 3 M570.5 74.2 l2.6 3 M570.5 89.6 l-2.6 -3 M570.5 89.6 l2.6 -3" stroke="#A6A6A6" fill="none" stroke-width="1.1"/>
<path d="M587 80.6 h5 l-2.5 2.8z" fill="#A6A6A6"/>
<path d="M601 67.6 v14.6 M604.8 67.6 v14.6 M608.6 76 v5.6 M613 76 v5.6 M608.6 82 l-1.6 -2 M608.6 82 l1.6 -2 M613 82 l-1.6 -2 M613 82 l1.6 -2 M601 82.4 l-1.6 -2 M601 82.4 l1.6 -2 M604.8 82.4 l-1.6 -2 M604.8 82.4 l1.6 -2" stroke="#A6A6A6" fill="none" stroke-width="1"/><text x="607" y="74.6" font-size="10" fill="#A6A6A6" font-family="&quot;Liberation Sans&quot;, sans-serif">A</text>
<path d="M620.4 73.6 h5 l-2.5 2.8z" fill="#A6A6A6"/>
<path d="M603.6 91.5 h-3 v13 h3 M612.4 91.5 h3 v13 h-3" stroke="#A6A6A6" fill="none" stroke-width="1"/><rect x="603.4" y="96" width="9.4" height="0.8" fill="#C4C4C4"/><rect x="603.4" y="98.4" width="9.4" height="0.8" fill="#C4C4C4"/><rect x="603.4" y="100.8" width="9.4" height="0.8" fill="#C4C4C4"/><path d="M608 91 v4.4 M608 91 l-1.8 2 M608 91 l1.8 2 M608 105 v-3.6 M608 105 l-1.8 -2 M608 105 l1.8 -2" stroke="#A6A6A6" fill="none" stroke-width="1"/>
<path d="M620.4 96.8 h5 l-2.5 2.8z" fill="#A6A6A6"/>
<path d="M603.4 113.4 h8.4 l3.4 5 h-11 l-3.2 2.6 v-3z" fill="#A6A6A6"/><rect x="605.5" y="119.5" width="9.6" height="8.6" fill="#F1F1F1" stroke="#A6A6A6"/><rect x="609.4" y="122" width="4.2" height="1" fill="#A6A6A6"/><rect x="609.4" y="125" width="4.2" height="1" fill="#A6A6A6"/><rect x="607.2" y="121.8" width="1.2" height="1.2" fill="#A6A6A6"/><rect x="607.2" y="124.8" width="1.2" height="1.2" fill="#A6A6A6"/>
<path d="M620.4 120 h5 l-2.5 2.8z" fill="#A6A6A6"/>
<rect x="450" y="108" width="14" height="1" fill="#A6A6A6"/><rect x="450" y="114" width="14" height="1" fill="#A6A6A6"/><rect x="450" y="111" width="10" height="1" fill="#A6A6A6"/><rect x="450" y="117" width="10" height="1" fill="#A6A6A6"/>
<rect x="472" y="108" width="14" height="1" fill="#A6A6A6"/><rect x="472" y="114" width="14" height="1" fill="#A6A6A6"/><rect x="474" y="111" width="10" height="1" fill="#A6A6A6"/><rect x="474" y="117" width="10" height="1" fill="#A6A6A6"/>
<rect x="494" y="108" width="14" height="1" fill="#A6A6A6"/><rect x="494" y="114" width="14" height="1" fill="#A6A6A6"/><rect x="498" y="111" width="10" height="1" fill="#A6A6A6"/><rect x="498" y="117" width="10" height="1" fill="#A6A6A6"/>
<rect x="516" y="108" width="14" height="1" fill="#A6A6A6"/><rect x="516" y="111" width="14" height="1" fill="#A6A6A6"/><rect x="516" y="114" width="14" height="1" fill="#A6A6A6"/><rect x="516" y="117" width="14" height="1" fill="#A6A6A6"/>
<rect x="538" y="102" width="1" height="22" fill="#D4D4D4"/>
<rect x="547" y="108" width="5.8" height="1" fill="#A6A6A6"/><rect x="547" y="111" width="5.8" height="1" fill="#A6A6A6"/><rect x="547" y="114" width="5.8" height="1" fill="#A6A6A6"/><rect x="547" y="117" width="5.8" height="1" fill="#A6A6A6"/><rect x="554.4" y="108" width="5.8" height="1" fill="#A6A6A6"/><rect x="554.4" y="111" width="5.8" height="1" fill="#A6A6A6"/><rect x="554.4" y="114" width="5.8" height="1" fill="#A6A6A6"/><rect x="554.4" y="117" width="5.8" height="1" fill="#A6A6A6"/>
<path d="M566 112.2 h5 l-2.5 2.8z" fill="#A6A6A6"/>
<rect x="640.5" y="66.5" width="136" height="62" fill="#fff" stroke="#ABABAB"/>
<rect x="763" y="67" width="13" height="20.5" fill="#E1E1E1"/><rect x="762.5" y="66.5" width="14" height="21" fill="none" stroke="#C6C6C6"/><rect x="762.5" y="87.5" width="14" height="19" fill="#fff" stroke="#C6C6C6"/><rect x="762.5" y="106.5" width="14" height="22" fill="#fff" stroke="#C6C6C6"/>
<path d="M767 78 h5 l-2.5 -2.8z" fill="#C4C4C4"/><path d="M767 96 h5 l-2.5 2.8z" fill="#666"/><rect x="766.4" y="114" width="6.4" height="1.1" fill="#666"/><path d="M767 117.2 h5 l-2.5 2.8z" fill="#666"/>
<g fill="none" stroke="#626262" stroke-width="1" stroke-linejoin="round"><rect x="643.5" y="70.5" width="14" height="12"/><path d="M664 70.4 l14 13.2"/><path d="M684 70.4 l13.6 12.8 M697.8 79.6 v3.8 h-3.8"/><rect x="703.3" y="71.5" width="15.2" height="11"/><ellipse cx="730.5" cy="77" rx="7.3" ry="5.6"/><rect x="743.3" y="71.5" width="15.4" height="11" rx="2.6"/><path d="M651.5 90.4 l6.4 13 h-12.8z"/><path d="M663 92 h7.6 v10.6 h8.4"/><path d="M683.4 90.6 h7.2 v10.8 h7.6 M695.8 98.8 l2.8 2.6 l-2.8 2.6"/><path d="M703.4 93.6 h7 v-3.8 l7.6 6.8 l-7.6 6.8 v-3.8 h-7z"/><path d="M727.4 89.8 h6.6 v6.6 h3.8 l-7.1 7.2 l-7.1 -7.2 h3.8z"/><path d="M747 91.6 h6.6 a3.4 3.4 0 0 0 4.6 4.4 v4.4 a2 2 0 0 1 -2 2 h-10 a2 2 0 0 1 -2 -2 v-5.8 a3 3 0 0 1 2.800 -3z"/><path d="M649.8 109.6 c-3.4 1.6 -4.2 4.4 -1.4 5.6 c3.600 1.2 6 1.400 5.400 4.400 c-0.600 2.600 -2.800 3.600 -3.200 1.600 c-0.300 -2 2.600 -2.400 3.200 -0.400 c0.400 1.400 -0.600 2.600 -1.800 3.200"/><path d="M664 111.800 c8 -0.600 13.400 4 14.800 11.800"/><path d="M683.4 118.600 c2.400 -7.600 6 -8.400 8.200 -1.600 c1.800 5.800 3.600 7 7.200 6.400"/><path d="M711.8 111.400 c-2.400 0 -2.200 1 -2.200 2.600 c0 1.600 -0.400 2.600 -1.800 2.800 c1.400 0.200 1.800 1.200 1.800 2.800 c0 1.600 -0.200 2.600 2.200 2.600"/><path d="M729.800 111.400 c2.400 0 2.200 1 2.200 2.600 c0 1.600 0.400 2.600 1.800 2.800 c-1.400 0.200 -1.800 1.200 -1.800 2.800 c0 1.600 0.200 2.600 -2.200 2.600"/><path d="M750.7 110.6 L752.6 115.5 L757.9 115.9 L753.8 119.2 L755.2 124.3 L750.7 121.5 L746.2 124.3 L747.6 119.2 L743.5 115.9 L748.8 115.5Z"/></g>
<text x="645.6" y="77.6" font-size="7.5" font-weight="bold" fill="#3A6FB7" font-family="&quot;Liberation Sans&quot;, sans-serif">A</text><path d="M651.6 74.4 h4.4 M651.6 76.8 h4.4 M645.4 79.6 h10.6" stroke="#9A9A9A" stroke-width="0.8"/>
<rect x="793" y="72.4" width="18.8" height="18.2" fill="#EDC06A"/><rect x="789.3" y="68.6" width="11.4" height="11" fill="#fff" stroke="#7A7A7A"/><rect x="804.6" y="83.4" width="11.2" height="10.8" fill="#fff" stroke="#7A7A7A"/>
<path d="M801.200 123.400 h5 l-2.500 2.800z" fill="#666"/>
<defs><pattern id="qdots" width="3" height="3" patternUnits="userSpaceOnUse"><rect width="3" height="3" fill="#F8F8F8"/><rect width="1" height="1" fill="#DCDCDC"/></pattern></defs>
<rect x="835.5" y="69.5" width="25" height="26" rx="5.5" fill="url(#qdots)" stroke="#D2D2D2"/>
<path d="M864.600 73.800 l1.400 1.200 l-7.800 12.600 l-3.400 -2.400z" fill="#B4B4B4"/><path d="M854.200 85.800 l3.400 2.400 c-0.400 3.800 -4.200 6.400 -11 7.400 c3.600 -2.400 4 -7.200 7.600 -9.800z" fill="#BCBCBC"/>
<path d="M861.800 123 h5 l-2.500 2.800z" fill="#ABABAB"/>
<g fill="none" stroke="#B0B0B0" stroke-width="1.1"><path d="M876.400 72.600 l5.400 -4.800 l5.800 6 l-5.600 4.600z"/><path d="M880.400 69 c-1.600 -3 1.800 -4.200 2.800 -1.600"/></g><path d="M887 73.800 c1.400 1.400 2 2.800 1 3.600 c-1 0.600 -1.800 -0.600 -1 -3.600z" fill="#B0B0B0"/><rect x="873" y="78.800" width="16" height="3" fill="#E2E2E2"/>
<path d="M881 90.500 h-7.500 v10 h7.500" fill="none" stroke="#B0B0B0" stroke-width="1.1"/><path d="M879.600 98.600 l1 -3.200 l6 -6 l2.200 2.200 l-6 6z" fill="#B0B0B0"/>
<path d="M877.600 115 h9 l2 2.400 l-3 6.600 h-9.600 l-1.600 -2.600z" fill="#ECECEC" stroke="#B0B0B0" stroke-width="1"/><path d="M875 121.800 l1.400 2.400 h9.400 l2.800 -6.200 v2 l-2.600 6 h-9.800 l-1.600 -2.600z" fill="#B0B0B0"/>
<path d="M944.8 72.3 h5 l-2.500 2.800z" fill="#ABABAB"/>
<path d="M969.6 95.4 h5 l-2.500 2.800z" fill="#ABABAB"/>
<path d="M965 118.3 h5 l-2.500 2.800z" fill="#ABABAB"/>
<circle cx="1001.2" cy="72.200" r="3.600" fill="none" stroke="#3A6FB7" stroke-width="1.600"/><path d="M998.500 75 l-5.600 4.800" stroke="#3A6FB7" stroke-width="2.200" fill="none"/>
<text x="990.800" y="96.200" font-size="10" font-weight="bold" font-family="&quot;Liberation Sans&quot;, sans-serif" textLength="11.200" lengthAdjust="spacingAndGlyphs"><tspan fill="#606060">a</tspan><tspan fill="#8A3FB0">b</tspan></text><text x="996.200" y="103.600" font-size="10" font-weight="bold" font-family="&quot;Liberation Sans&quot;, sans-serif" textLength="10.800" lengthAdjust="spacingAndGlyphs"><tspan fill="#606060">a</tspan><tspan fill="#3A6FB7">c</tspan></text>
<path d="M991.600 99.400 v2.400 h3 M993.400 100.400 l1.400 1.400 l-1.400 1.400" stroke="#3A6FB7" stroke-width="1" fill="none"/>
<path d="M995.500 112.500 v12.600 l3 -2.800 l2 4.600 l1.800 -0.800 l-2 -4.400 h4z" fill="#fff" stroke="#505050" stroke-width="1" stroke-linejoin="round"/>
<path d="M1060.400 95.600 h5 l-2.500 2.800z" fill="#666"/><path d="M1043.600 118.600 h5 l-2.500 2.800z" fill="#666"/>
<path d="M1096.500 147.600 l4.100 -4.100 l4.100 4.100" fill="none" stroke="#6A6A6A" stroke-width="2"/>
<rect x="148" y="664" width="967" height="1" fill="#BDBDBD"/><rect x="1" y="667" width="1114" height="1" fill="#C6C6C6"/>
<defs><pattern id="dots2" width="4" height="4" patternUnits="userSpaceOnUse"><rect width="4" height="4" fill="#DBDBDB"/><rect x="1" y="1" width="1" height="1" fill="#E9E9E9"/><rect x="3" y="3" width="1" height="1" fill="#E9E9E9"/></pattern></defs>
<rect x="1099" y="156" width="15" height="452" fill="url(#dots2)"/>
<rect x="1099.5" y="156.500" width="14" height="14" fill="#fff" stroke="#ABABAB"/><path d="M1103 166 h7 l-3.500 -4z" fill="#777"/>
<rect x="1099.500" y="555.500" width="14" height="37" fill="#fff" stroke="#ABABAB"/>
<rect x="1099.500" y="593.500" width="14" height="14" fill="#fff" stroke="#ABABAB"/><path d="M1103 598.500 h7 l-3.500 4z" fill="#777"/>
<path d="M1102.800 617.400 h7.400 l-3.700 -3.800z M1102.800 622 h7.400 l-3.700 -3.800z" fill="#666"/><path d="M1102.800 631 h7.400 l-3.700 3.800z M1102.800 635.600 h7.400 l-3.700 3.800z" fill="#666"/>
<g fill="none" stroke="#5E5E5E" stroke-width="1"><path d="M103.500 672.500 h-6 v9 h6 M103.500 672.500 v11 M103.500 672.500 h6 v9 h-6"/><path d="M102 682.400 l1.500 1.500 l1.500 -1.500" stroke-width="0.9"/></g><path d="M106.400 679.800 l0.800 -2.800 l3.700 -4 l2 1.900 l-3.700 4z" fill="#F1F1F1" stroke="#5E5E5E" stroke-width="0.9" stroke-linejoin="round"/><path d="M106.400 679.800 l0.500 -1.700 l1.200 1.200z" fill="#5E5E5E"/>
<path d="M599.400 674.400 h5.200 l-2.600 -2.800z" fill="#5E5E5E"/><rect x="596.600" y="676" width="10.800" height="1" fill="#5E5E5E"/><rect x="596.600" y="679" width="10.800" height="1" fill="#5E5E5E"/><rect x="596.600" y="682" width="10.800" height="1" fill="#5E5E5E"/><rect x="596.600" y="685" width="7" height="1" fill="#5E5E5E"/>
<path d="M664 672.400 h12 v8.800 h-5.600 l-3 3 v-3 h-3.400z" fill="#5E5E5E"/>
<rect x="753" y="668" width="38" height="21" fill="#C8C8C8"/>
<g fill="none" stroke="#5E5E5E" stroke-width="1.100"><rect x="765.500" y="672" width="13.600" height="11.600"/><path d="M769.400 672 v11.600 M769.400 679.400 h9.600"/><rect x="771.600" y="674.200" width="5.200" height="3"/></g>
<g fill="none" stroke="#5E5E5E" stroke-width="1.100"><rect x="803.5" y="672" width="5.200" height="4"/><rect x="803.5" y="679.6" width="5.200" height="4"/><rect x="811.5" y="672" width="5.200" height="4"/><rect x="811.5" y="679.6" width="5.200" height="4"/></g>
<g fill="none" stroke="#5E5E5E" stroke-width="1"><path d="M847.500 673.400 c-2 -1.400 -4 -1.400 -6 -1 v9.600 c2 -0.400 4 -0.400 6 1 c2 -1.400 4 -1.400 6 -1 v-9.600 c-2 -0.400 -4 -0.400 -6 1z M847.500 673.400 v10.800"/><path d="M843 674.400 h3 M843 676.400 h3 M843 678.400 h3 M843 680.400 h3 M849 674.400 h3 M849 676.400 h3 M849 678.400 h3 M849 680.400 h3" stroke-width="0.800"/></g><path d="M845.900 683 h3.200 l-1.600 1.600z" fill="#5E5E5E"/>
<g fill="none" stroke="#5E5E5E" stroke-width="1.100"><path d="M879.200 672.500 h13.400"/><path d="M881 673 v5.600 h9.800 v-5.600"/><path d="M885.900 678.600 v4.600 M882.800 683.400 h6.200"/></g>
<rect x="910" y="676.600" width="6" height="2" fill="#5E5E5E"/><rect x="920" y="677" width="102" height="1" fill="#8A8A8A"/><rect x="971" y="675" width="1" height="5" fill="#8A8A8A"/><rect x="951" y="672" width="4" height="11.200" fill="#5E5E5E"/><rect x="1026" y="676.600" width="8.400" height="2" fill="#5E5E5E"/><rect x="1029.200" y="673.400" width="2" height="8.400" fill="#5E5E5E"/>
<g fill="none" stroke="#5E5E5E" stroke-width="1"><rect x="1084.500" y="672.500" width="12" height="12"/></g><path d="M1090.500 674 l1.600 2 h-3.200z M1090.500 683 l1.600 -2 h-3.200z M1086 678.500 l2 -1.600 v3.200z M1095 678.500 l-2 -1.600 v3.200z" fill="#5E5E5E"/><path d="M1090.500 675.500 v1.800 M1090.500 679.700 v1.800 M1087.500 678.500 h1.800 M1091.700 678.500 h1.800" stroke="#5E5E5E" stroke-width="0.900"/>
<text x="22.3" y="52.3" font-size="13" fill="#fff" textLength="17.7" lengthAdjust="spacingAndGlyphs">File</text>
<text x="78.3" y="52.3" font-size="13" fill="#B7472A" textLength="32.7" lengthAdjust="spacingAndGlyphs">Home</text>
<text x="139.5" y="52.3" font-size="13" fill="#fff" textLength="29.1" lengthAdjust="spacingAndGlyphs">Insert</text>
<text x="198.2" y="52.3" font-size="13" fill="#fff" textLength="35.6" lengthAdjust="spacingAndGlyphs">Design</text>
<text x="263" y="52.3" font-size="13" fill="#fff" textLength="58" lengthAdjust="spacingAndGlyphs">Transitions</text>
<text x="350.4" y="52.3" font-size="13" fill="#fff" textLength="60.4" lengthAdjust="spacingAndGlyphs">Animations</text>
<text x="440" y="52.3" font-size="13" fill="#fff" textLength="57" lengthAdjust="spacingAndGlyphs">Slide Show</text>
<text x="526" y="52.3" font-size="13" fill="#fff" textLength="37.3" lengthAdjust="spacingAndGlyphs">Review</text>
<text x="592.3" y="52.3" font-size="13" fill="#fff" textLength="24.3" lengthAdjust="spacingAndGlyphs">View</text>
<text x="663.3" y="52.3" font-size="13" fill="#fff" textLength="159.7" lengthAdjust="spacingAndGlyphs">Tell me what you want to do...</text>
<text x="945.5" y="52.3" font-size="13" fill="#fff" textLength="80.5" lengthAdjust="spacingAndGlyphs">Office Tutorials</text>
<text x="1062.3" y="52.3" font-size="13" fill="#fff" textLength="28.9" lengthAdjust="spacingAndGlyphs">Share</text>
<text x="12" y="113" font-size="13" fill="#444" textLength="28" lengthAdjust="spacingAndGlyphs">Paste</text>
<text x="10.5" y="149" font-size="11.5" fill="#666" textLength="50.5" lengthAdjust="spacingAndGlyphs">Clipboard</text>
<text x="100.5" y="113" font-size="13" fill="#444" textLength="23.5" lengthAdjust="spacingAndGlyphs">New</text>
<text x="95.5" y="129.5" font-size="13" fill="#444" textLength="24.5" lengthAdjust="spacingAndGlyphs">Slide</text>
<text x="155.5" y="80" font-size="13" fill="#444" textLength="35.5" lengthAdjust="spacingAndGlyphs">Layout</text>
<text x="155.5" y="103" font-size="13" fill="#444" textLength="27.5" lengthAdjust="spacingAndGlyphs">Reset</text>
<text x="155.5" y="125.8" font-size="13" fill="#444" textLength="38.0" lengthAdjust="spacingAndGlyphs">Section</text>
<text x="135.5" y="149" font-size="11.5" fill="#666" textLength="28.5" lengthAdjust="spacingAndGlyphs">Slides</text>
<text x="307.5" y="149" font-size="11.5" fill="#666" textLength="23.5" lengthAdjust="spacingAndGlyphs">Font</text>
<text x="503.5" y="149" font-size="11.5" fill="#666" textLength="52.5" lengthAdjust="spacingAndGlyphs">Paragraph</text>
<text x="782.5" y="113" font-size="13" fill="#444" textLength="41.5" lengthAdjust="spacingAndGlyphs">Arrange</text>
<text x="833.5" y="113" font-size="13" fill="#A3A3A3" textLength="29.5" lengthAdjust="spacingAndGlyphs">Quick</text>
<text x="829.5" y="129.5" font-size="13" fill="#A3A3A3" textLength="28.5" lengthAdjust="spacingAndGlyphs">Styles</text>
<text x="892" y="79" font-size="13" fill="#A3A3A3" textLength="49.5" lengthAdjust="spacingAndGlyphs">Shape Fill</text>
<text x="892" y="102" font-size="13" fill="#A3A3A3" textLength="74" lengthAdjust="spacingAndGlyphs">Shape Outline</text>
<text x="892" y="125" font-size="13" fill="#A3A3A3" textLength="70" lengthAdjust="spacingAndGlyphs">Shape Effects</text>
<text x="779.5" y="149" font-size="11.5" fill="#666" textLength="43.5" lengthAdjust="spacingAndGlyphs">Drawing</text>
<text x="1010" y="79" font-size="13" fill="#444" textLength="23" lengthAdjust="spacingAndGlyphs">Find</text>
<text x="1010" y="102" font-size="13" fill="#444" textLength="41" lengthAdjust="spacingAndGlyphs">Replace</text>
<text x="1010" y="125" font-size="13" fill="#444" textLength="30" lengthAdjust="spacingAndGlyphs">Select</text>
<text x="1011.5" y="149" font-size="11.5" fill="#666" textLength="36.5" lengthAdjust="spacingAndGlyphs">Editing</text>
<text x="224.6" y="117" font-size="13" fill="#9C9C9C" font-weight="bold" stroke="#9C9C9C" stroke-width="0.45" textLength="7.4" lengthAdjust="spacingAndGlyphs">B</text>
<text x="247.4" y="117" font-size="13.5" fill="#9C9C9C" font-weight="bold" font-style="italic" style="font-family:&quot;Liberation Serif&quot;,serif" textLength="6.0" lengthAdjust="spacingAndGlyphs">I</text>
<text x="269" y="116.6" font-size="12.5" fill="#9C9C9C" font-weight="bold" stroke="#9C9C9C" stroke-width="0.45" textLength="7.2" lengthAdjust="spacingAndGlyphs">U</text>
<text x="291.8" y="117" font-size="13" fill="#9C9C9C" font-weight="bold" stroke="#9C9C9C" stroke-width="0.45" textLength="6.4" lengthAdjust="spacingAndGlyphs">S</text>
<text x="309.4" y="117.2" font-size="10.5" fill="#A3A3A3" stroke="#A3A3A3" stroke-width="0.35" textLength="15.8" lengthAdjust="spacingAndGlyphs">abc</text>
<text x="332" y="113.8" font-size="10.5" fill="#A3A3A3" stroke="#A3A3A3" stroke-width="0.35" textLength="14" lengthAdjust="spacingAndGlyphs">AV</text>
<text x="364.3" y="117.2" font-size="13" fill="#A3A3A3" stroke="#A3A3A3" stroke-width="0.35" textLength="14.7" lengthAdjust="spacingAndGlyphs">Aa</text>
<text x="409.2" y="117.6" font-size="14.5" fill="#A3A3A3" stroke="#A3A3A3" stroke-width="0.35" textLength="10.0" lengthAdjust="spacingAndGlyphs">A</text>
<text x="368.4" y="88" font-size="14" fill="#A3A3A3" stroke="#A3A3A3" stroke-width="0.35" textLength="9.2" lengthAdjust="spacingAndGlyphs">A</text>
<text x="391.4" y="88" font-size="10.5" fill="#A3A3A3" stroke="#A3A3A3" stroke-width="0.35" textLength="7.0" lengthAdjust="spacingAndGlyphs">A</text>
<text x="8.5" y="682" font-size="12" fill="#444" textLength="67.5" lengthAdjust="spacingAndGlyphs">Slide 11 of 11</text>
<text x="612.5" y="682" font-size="12" fill="#444" textLength="30.5" lengthAdjust="spacingAndGlyphs">Notes</text>
<text x="680.5" y="682" font-size="12" fill="#444" textLength="53.5" lengthAdjust="spacingAndGlyphs">Comments</text>
<text x="1048" y="682" font-size="12" fill="#444" textLength="22" lengthAdjust="spacingAndGlyphs">66%</text>
<text x="13" y="195.8" font-size="15" fill="#505050" textLength="8" lengthAdjust="spacingAndGlyphs">6</text>
<text x="13" y="274.8" font-size="15" fill="#505050" textLength="8" lengthAdjust="spacingAndGlyphs">7</text>
<text x="13" y="353.8" font-size="15" fill="#505050" textLength="8" lengthAdjust="spacingAndGlyphs">8</text>
<text x="13" y="432.8" font-size="15" fill="#505050" textLength="8" lengthAdjust="spacingAndGlyphs">9</text>
<text x="4.8" y="511.2" font-size="15" fill="#505050" textLength="16.0" lengthAdjust="spacingAndGlyphs">10</text>
<text x="4.8" y="590.2" font-size="15" fill="#D24726" textLength="16.0" lengthAdjust="spacingAndGlyphs">11</text>
<text y="23" font-size="12.5" fill="#fff"><tspan x="453" textLength="135" lengthAdjust="spacingAndGlyphs">sleek_element_19230.pptx</tspan> <tspan x="592.6" textLength="3.4" lengthAdjust="spacingAndGlyphs">-</tspan> <tspan x="599.8" textLength="60.5" lengthAdjust="spacingAndGlyphs">PowerPoint</tspan></text>
</svg>
<div class="abs bl"></div><div class="abs br"></div><div class="abs bb"></div>
</body></html>
